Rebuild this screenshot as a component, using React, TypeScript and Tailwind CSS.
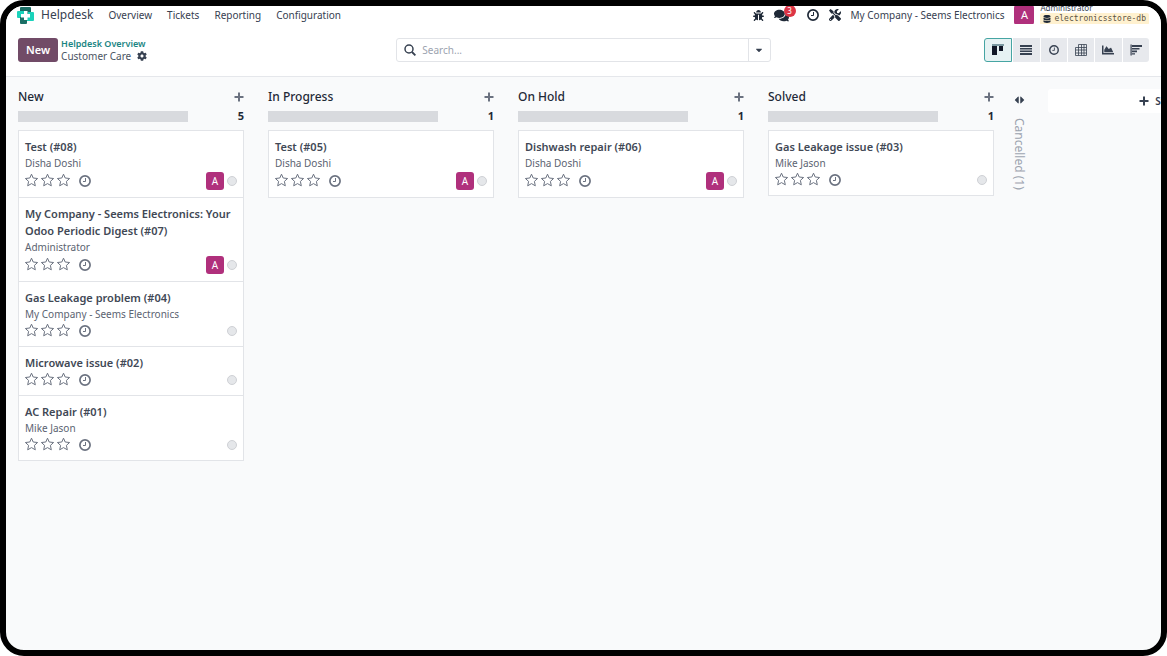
import React from "react";
import {
  FaBug,
  FaCaretDown,
  FaCaretLeft,
  FaCaretRight,
  FaChartArea,
  FaCog,
  FaComments,
  FaDatabase,
  FaTools,
} from "react-icons/fa";

type Ticket = { title: string; customer?: string; assigned?: boolean };
type Stage = { name: string; tickets: Ticket[] };

const stages: Stage[] = [
  {
    name: "New",
    tickets: [
      { title: "Test (#08)", customer: "Disha Doshi", assigned: true },
      {
        title: "My Company - Seems Electronics: Your Odoo Periodic Digest (#07)",
        customer: "Administrator",
        assigned: true,
      },
      { title: "Gas Leakage problem (#04)", customer: "My Company - Seems Electronics" },
      { title: "Microwave issue (#02)" },
      { title: "AC Repair (#01)", customer: "Mike Jason" },
    ],
  },
  { name: "In Progress", tickets: [{ title: "Test (#05)", customer: "Disha Doshi", assigned: true }] },
  { name: "On Hold", tickets: [{ title: "Dishwash repair (#06)", customer: "Disha Doshi", assigned: true }] },
  { name: "Solved", tickets: [{ title: "Gas Leakage issue (#03)", customer: "Mike Jason" }] },
];

function Clock({ className }: { className: string }) {
  return (
    <svg viewBox="0 0 12 12" className={className} fill="none" stroke="currentColor" aria-hidden="true">
      <circle cx="6" cy="6" r="5.1" strokeWidth="1.7" />
      <path d="M6.5 3v3.5H4" strokeWidth="1" />
    </svg>
  );
}

function Star() {
  return (
    <svg viewBox="0 0 14 14" className="size-3.5" fill="none" stroke="currentColor" aria-hidden="true">
      <path d="M6.5 1.2l1.7 3.8 4.4.5-3.2 2.9.9 4.4-3.8-2.2-3.8 2.2.9-4.4L.4 5.5 4.8 5z" strokeWidth="1" />
    </svg>
  );
}

function Plus() {
  return (
    <svg viewBox="0 0 10 10" className="size-2.5" fill="currentColor" aria-hidden="true">
      <path d="M4 .5h2V4h3.5v2H6v3.5H4V6H.5V4H4z" />
    </svg>
  );
}

function SearchIcon() {
  return (
    <svg viewBox="0 0 12 12" className="size-3 shrink-0 text-[#374151]" fill="none" stroke="currentColor" aria-hidden="true">
      <circle cx="5" cy="5" r="4" strokeWidth="1.5" />
      <path d="M8 8l3.4 3.4" strokeWidth="1.8" />
    </svg>
  );
}

function Logo() {
  return (
    <svg viewBox="0 0 17 17" className="size-[17px] shrink-0" aria-hidden="true">
      <path d="M3 1a1 1 0 0 1 1-1h9a1 1 0 0 1 1 1v7H8V4H3z" fill="#1b6f66" />
      <path d="M0 5a1 1 0 0 1 1-1h6v4.500h-1.500V11H1a1 1 0 0 1-1-1z" fill="#1ad3bb" />
      <path d="M11 5h5a1 1 0 0 1 1 1v7a1 1 0 0 1-1 1h-6V9h1z" fill="#1ad3bb" />
      <path d="M3 10h7v6a1 1 0 0 1-1 1H4a1 1 0 0 1-1-1z" fill="#1b6f66" />
      <path d="M7 4h3.500v3H13v3.500h-2.500V13H7v-2.500H4V7h3z" fill="#fff" />
    </svg>
  );
}

function KanbanIcon() {
  return (
    <svg viewBox="0 0 12 12" className="size-3" aria-hidden="true">
      <path d="M0 0h12v2H0z" fill="#7d9ba3" />
      <path d="M0 2h5v9H0zM7 2h4v5H7z" fill="#111827" />
    </svg>
  );
}

function ListIcon() {
  return (
    <svg viewBox="0 0 12 12" className="size-3" fill="currentColor" aria-hidden="true">
      <path d="M0 1h12v2H0zM0 4h12v1.500H0zM0 6.500h12V8H0zM0 9h12v2H0z" />
    </svg>
  );
}

function PivotIcon() {
  return (
    <svg viewBox="0 0 12 12" className="size-3" fill="none" stroke="currentColor" aria-hidden="true">
      <path d="M3.500.500h8v11h-11v-8h11M3.500.500v11M6.500.500v11M9 .500v11M.500 6h11M.500 9h11" strokeWidth=".8" />
    </svg>
  );
}

function CohortIcon() {
  return (
    <svg viewBox="0 0 12 12" className="size-3" fill="currentColor" aria-hidden="true">
      <path d="M.5.5h1.200v11H.5zM2 1h10v2H2zM2 4h7.500v1.600H2zM2 6.600h5v1.600H2zM2 9.200h3v1.300H2z" />
    </svg>
  );
}

const views = [
  { label: "Kanban", icon: <KanbanIcon /> },
  { label: "List", icon: <ListIcon /> },
  { label: "Activity", icon: <Clock className="size-2.5" /> },
  { label: "Pivot", icon: <PivotIcon /> },
  { label: "Graph", icon: <FaChartArea className="size-3" /> },
  { label: "Cohort", icon: <CohortIcon /> },
];

function NavBar() {
  return (
    <header className="flex h-[18px] items-center justify-between bg-white pr-3 pl-[11px] text-[10px] text-[#374151]">
      <nav className="flex items-center gap-[15px]">
        <a href="#helpdesk" className="flex items-center gap-[7px] text-[12px]">
          <Logo />
          Helpdesk
        </a>
        <a href="#overview">Overview</a>
        <a href="#tickets">Tickets</a>
        <a href="#reporting">Reporting</a>
        <a href="#configuration">Configuration</a>
      </nav>
      <div className="flex items-center">
        <div className="flex items-center gap-2.5 text-[#1f2937]">
          <button aria-label="Debug">
            <FaBug className="size-[11px]" />
          </button>
          <button aria-label="Messages" className="relative mr-2">
            <FaComments className="size-[15px]" />
            <span className="absolute -top-[3px] left-2.5 flex size-3 items-center justify-center rounded-full bg-[#dc3545] text-[8px] leading-none text-white">
              3
            </span>
          </button>
          <button aria-label="Activities">
            <Clock className="size-3" />
          </button>
          <button aria-label="Studio">
            <FaTools className="size-3" />
          </button>
          <button className="text-[#374151]">My Company - Seems Electronics</button>
        </div>
        <button className="ml-2.5 flex items-center gap-1.5 text-left">
          <span className="flex size-5 items-center justify-center rounded-[3px] bg-[#b0307c] text-[11px] text-white">A</span>
          <span className="flex flex-col pb-0.5">
            <span className="text-[8px] leading-[10px]">Administrator</span>
            <span className="flex h-3 items-center gap-[3px] rounded-[2px] bg-[#fff1cf] px-[3px] font-['DejaVu_Sans_Mono',monospace] text-[8px] leading-3 text-[#5b5343]">
              <FaDatabase className="size-2 text-[#1f2937]" />
              electronicsstore-db
            </span>
          </span>
        </button>
      </div>
    </header>
  );
}

function ControlPanel() {
  return (
    <div className="grid h-[53px] grid-cols-3 items-center gap-1 border-b border-[#e5e7eb] bg-white px-3">
      <div className="flex items-center gap-[3px]">
        <button className="h-6 rounded-[3px] bg-[#714b67] px-2 text-[11px] font-semibold text-white">New</button>
        <div className="text-[10px] leading-3 text-[#4b5563]">
          <a href="#overview" className="block text-[9px] font-semibold text-[#1a8583]">
            Helpdesk Overview
          </a>
          <div className="flex items-center gap-1.5">
            Customer Care
            <button aria-label="Actions" className="text-[#374151]">
              <FaCog className="size-2.5" />
            </button>
          </div>
        </div>
      </div>
      <div className="flex h-6 items-stretch rounded-[3px] border border-[#e2e4e8]">
        <label className="flex flex-1 items-center gap-1.5 pl-[7px]">
          <SearchIcon />
          <input
            type="search"
            aria-label="Search"
            placeholder="Search..."
            className="w-full text-[10px] outline-none placeholder:text-[#9ca3af]"
          />
        </label>
        <button
          aria-label="Search options"
          className="flex w-[22px] items-center justify-center border-l border-[#e2e4e8] text-[#374151]"
        >
          <FaCaretDown className="size-2.5" />
        </button>
      </div>
      <div className="flex w-[165px] gap-px justify-self-end">
        {views.map((view, index) => (
          <button
            key={view.label}
            aria-label={view.label}
            aria-pressed={index === 0}
            className="flex h-6 flex-1 items-center justify-center bg-[#e7e9ed] text-[#374151] first:rounded-l-[3px] last:rounded-r-[3px] aria-pressed:border aria-pressed:border-[#46a5a3] aria-pressed:bg-[#e6f2f3]"
          >
            {view.icon}
          </button>
        ))}
      </div>
    </div>
  );
}

function TicketCard({ ticket }: { ticket: Ticket }) {
  return (
    <article className="border border-[#e2e4e8] bg-white px-1.5 py-[7px] not-first:-mt-px">
      <h3 className="text-[11px] leading-[17px] font-semibold text-[#414855]">{ticket.title}</h3>
      {ticket.customer && <p className="text-[10px] leading-4 text-[#5b6371]">{ticket.customer}</p>}
      <div className="mt-px flex items-center text-[#6b7280]">
        <div className="flex gap-0.5 pb-0.5">
          {["Low", "High", "Urgent"].map((level) => (
            <button key={level} aria-label={level}>
              <Star />
            </button>
          ))}
        </div>
        <button aria-label="Schedule activity" className="ml-2">
          <Clock className="size-3" />
        </button>
        <div className="ml-auto flex items-center gap-[3px]">
          {ticket.assigned && (
            <span className="flex size-[18px] items-center justify-center rounded-[3px] bg-[#b0307c] text-[10px] text-white">
              A
            </span>
          )}
          <button aria-label="Status" className="size-2.5 rounded-full border border-[#cfd1d5] bg-[#e5e7ea]" />
        </div>
      </div>
    </article>
  );
}

function StageColumn({ stage }: { stage: Stage }) {
  return (
    <section className="w-[226px] shrink-0">
      <div className="flex h-[18px] items-center justify-between">
        <h2 className="text-[12px] font-medium text-[#1f2937]">{stage.name}</h2>
        <button aria-label={`Add ticket to ${stage.name}`} className="text-[#6b7280]">
          <Plus />
        </button>
      </div>
      <div className="mt-0.5 mb-1.5 flex h-4 items-center justify-between">
        <div className="h-[11px] w-3/4 bg-[#d8dade]" />
        <span className="text-[11px] leading-4 font-bold text-[#1f2937]">{stage.tickets.length}</span>
      </div>
      <div>
        {stage.tickets.map((ticket) => (
          <TicketCard key={ticket.title} ticket={ticket} />
        ))}
      </div>
    </section>
  );
}

export default function App() {
  return (
    <div className="flex min-h-screen flex-col overflow-hidden rounded-[24px] border-[6px] border-black bg-[#f9fafb] font-['Noto_Sans',sans-serif]">
      <NavBar />
      <ControlPanel />
      <main className="flex flex-1 gap-6 overflow-hidden px-3 pt-[11px]">
        {stages.map((stage) => (
          <StageColumn key={stage.name} stage={stage} />
        ))}
        <div className="-ml-2 flex shrink-0 gap-5">
          <button className="flex w-[18px] flex-col items-center gap-3 self-start pt-1.5 text-[#9ca3af]">
            <span className="flex gap-px text-[#374151]">
              <FaCaretLeft className="h-3 w-[5px]" />
              <FaCaretRight className="h-3 w-[5px]" />
            </span>
            <span className="text-[12px] leading-4 whitespace-nowrap [writing-mode:vertical-rl]">Cancelled (1)</span>
          </button>
          <button className="mt-px flex h-6 w-[226px] items-center justify-center gap-1.5 rounded-[3px] bg-white text-[10px] font-semibold text-[#374151]">
            <Plus />
            Stage
          </button>
        </div>
      </main>
    </div>
  );
}
